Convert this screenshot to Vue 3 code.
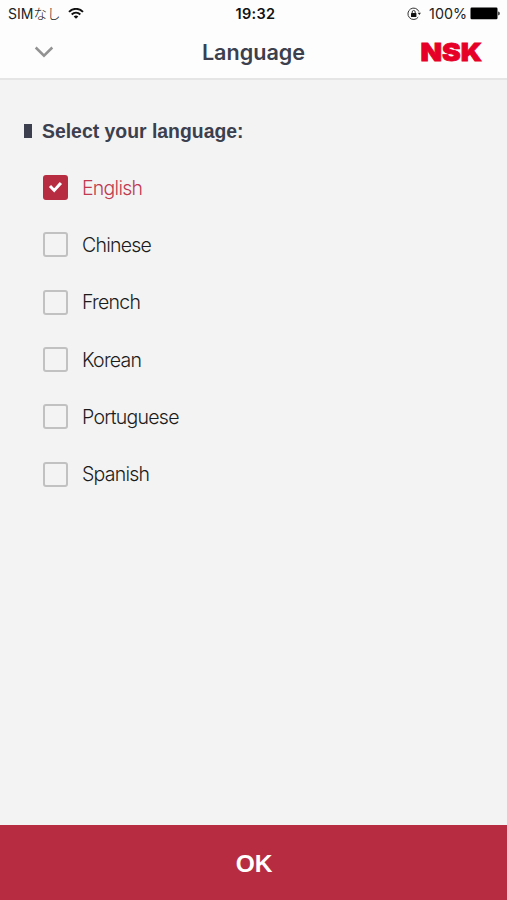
<script setup>
import { ref } from 'vue'

const languages = ['English', 'Chinese', 'French', 'Korean', 'Portuguese', 'Spanish']
const selected = ref('English')
</script>

<template>
  <div class="screen">
    <header class="top">
      <div class="status">
        <div class="carrier">
          <span class="sim">SIM<span class="kana">なし</span></span>
          <svg class="wifi" width="16" height="12" viewBox="0 0 16 12" fill="none" stroke="#111" stroke-width="1.9">
            <path d="M1 3.9C4.9-.2 11.1-.2 15 3.9" />
            <path d="M3.7 6.5c2.4-2.5 6.2-2.5 8.6 0" />
            <path d="M5.7 8.4c1.3-1.3 3.3-1.3 4.6 0L8 10.8z" fill="#111" stroke="none" />
          </svg>
        </div>
        <time class="clock">19:32</time>
        <div class="power">
          <svg class="lock" width="14" height="14" viewBox="0 0 14 14" fill="none" stroke="#333">
            <path d="M11.9 4.6A5.7 5.7 0 1 0 11.2 10.2" stroke-width="1" />
            <path d="M10.6 5.7h3.3l-1.5 2.4z" fill="#222" stroke="none" />
            <rect x="4" y="6" width="5.4" height="3.9" rx=".5" fill="#111" stroke="none" />
            <path d="M5.2 6.3V5a1.5 1.5 0 0 1 3 0v1.3" stroke-width="1" />
          </svg>
          <span class="percent">100%</span>
          <svg class="battery" width="31" height="13" viewBox="0 0 31 13">
            <rect x=".5" y=".5" width="27" height="11.7" rx="1.2" />
            <path d="M28.3 4.4c1.8.2 1.8 3.7 0 3.9z" />
          </svg>
        </div>
      </div>
      <div class="nav">
        <svg class="chevron" width="20" height="12" viewBox="0 0 20 12" fill="none" stroke="#929292" stroke-width="2.5">
          <path d="M1.7 1.5 10 9.7l8.3-8.2" />
        </svg>
        <h1 class="title">Language</h1>
        <svg class="logo" width="64" height="22" viewBox="0 0 64 22">
          <text x="0.5" y="19.5" textLength="61.5" lengthAdjust="spacingAndGlyphs">NSK</text>
        </svg>
      </div>
    </header>

    <main class="content">
      <h2 class="prompt"><span class="marker"></span><span class="prompt-text">Select your language:</span></h2>
      <ul class="options">
        <li
          v-for="name in languages"
          :key="name"
          class="option"
          :class="{ active: name === selected }"
          @click="selected = name"
        >
          <span class="box">
            <svg v-if="name === selected" width="15" height="13" viewBox="0 0 15 13" fill="none" stroke="#fff" stroke-width="3">
              <path d="M2 4.9 6.2 9.4l6.7-7.5" />
            </svg>
          </span>
          <span class="label">{{ name }}</span>
        </li>
      </ul>
    </main>

    <button class="ok" type="button">OK</button>
  </div>
</template>

<style>
body {
  margin: 0;
}
</style>

<style scoped>
.screen {
  display: flex;
  flex-direction: column;
  width: 507px;
  height: 900px;
  background: #f3f3f3;
  font-family: "Liberation Sans", Arial, sans-serif;
  overflow: hidden;
}
.top {
  box-sizing: border-box;
  height: 80px;
  background: #fdfdfd;
  border-bottom: 2px solid #e5e5e5;
}
.status {
  display: grid;
  grid-template-columns: 1fr auto 1fr;
  align-items: center;
  height: 27px;
  padding: 0 6px 0 8px;
  font-family: Inter, "Noto Sans CJK JP", sans-serif;
  font-size: 14px;
  line-height: 27px;
  color: #222;
}
.carrier,
.power {
  display: flex;
  align-items: center;
}
.sim {
  width: 53px;
  white-space: nowrap;
}
.kana {
  font-family: "Noto Sans CJK JP", sans-serif;
  font-size: 13.5px;
  font-weight: 300;
}
.wifi {
  margin-left: 7px;
}
.clock {
  padding-left: 2px;
  font-size: 14.5px;
  font-weight: 600;
  letter-spacing: 0.3px;
  color: #111;
}
.power {
  justify-content: flex-end;
}
.percent {
  margin: 0 3px 0 8px;
  font-size: 14.3px;
}
.battery {
  fill: #000;
}
.nav {
  display: grid;
  grid-template-columns: 1fr auto 1fr;
  align-items: center;
  height: 50px;
}
.chevron {
  margin-left: 34px;
}
.title {
  margin: 0;
  font-family: Inter, sans-serif;
  font-size: 21.6px;
  font-weight: 600;
  line-height: 50px;
  color: #3b3f4e;
}
.logo {
  justify-self: end;
  margin-right: 23px;
  overflow: visible;
}
.logo text {
  font-family: Inter, sans-serif;
  font-size: 25px;
  font-weight: 900;
  fill: #e60027;
  stroke: #e60027;
  stroke-width: 0.8px;
}
.content {
  flex: 1;
  padding: 40px 24px 0;
}
.prompt {
  display: flex;
  align-items: center;
  gap: 10px;
  height: 22px;
  margin: 0;
  font-size: 19.4px;
  font-weight: 700;
  line-height: 22px;
  color: #3b3f4e;
}
.marker {
  width: 8px;
  height: 14px;
  background: #3b3f4e;
}
.options {
  margin: 17px 0 0 19px;
  padding: 0;
  list-style: none;
}
.option {
  display: flex;
  align-items: center;
  gap: 14px;
  height: 57.3px;
  color: #1c1c1c;
}
.box {
  box-sizing: border-box;
  display: flex;
  align-items: center;
  justify-content: center;
  width: 25px;
  height: 25px;
  border: 2px solid #c1c1c1;
  border-radius: 3px;
}
.label {
  font-family: Inter, sans-serif;
  font-size: 19.5px;
  font-weight: 300;
  line-height: 24px;
  letter-spacing: -0.75px;
}
.active {
  color: #c03a50;
}
.active .box {
  border-color: #b72c41;
  background: #b72c41;
}
.ok {
  height: 75px;
  padding: 2px 0 0 1px;
  border: 0;
  background: #b72c41;
  color: #fff;
  font-family: "Liberation Sans", Arial, sans-serif;
  font-size: 24.5px;
  font-weight: 700;
}
</style>
